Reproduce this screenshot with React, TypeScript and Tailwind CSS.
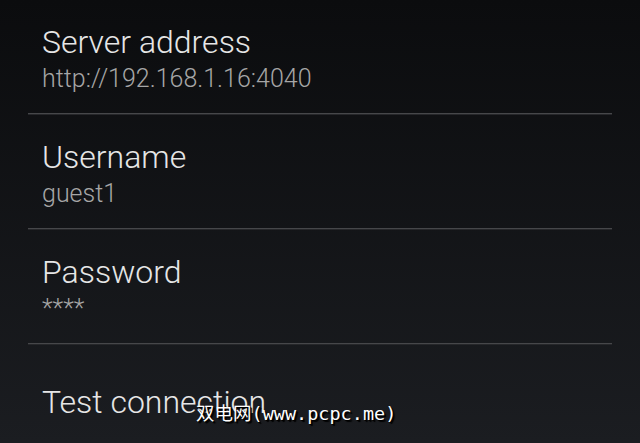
import React from 'react';

type Pref = { title: string; summary?: string };

const prefs: Pref[] = [
  { title: 'Server address', summary: 'http://192.168.1.16:4040' },
  { title: 'Username', summary: 'guest1' },
  { title: 'Password', summary: '****' },
  { title: 'Test connection' },
];

const Divider: React.FC = () => (
  <div className="mx-[28px] flex flex-col">
    <div className="h-px bg-[#46474a]" />
    <div className="h-px bg-[#26272a]" />
  </div>
);

const Row: React.FC<{ pref: Pref }> = ({ pref }) => (
  <div
    className={
      pref.summary
        ? 'flex h-[113px] flex-col pl-[42px] pt-[23px]'
        : 'flex h-[113px] flex-col justify-center pl-[42px]'
    }
  >
    <div className="text-[32px] font-light leading-[38px] text-[#e6e6e6]">{pref.title}</div>
    {pref.summary && (
      <div className="mt-[3px] text-[25px] font-light leading-[30px] text-[#a6a6a6]">{pref.summary}</div>
    )}
  </div>
);

export default function App() {
  return (
    <div
      className="relative h-[443px] w-[640px] overflow-hidden bg-gradient-to-b from-[#0b0c0e] to-[#1b1d21]"
      style={{ fontFamily: 'Roboto, "Noto Sans", sans-serif' }}
    >
      {prefs.map((p, i) => (
        <React.Fragment key={p.title}>
          {i > 0 && <Divider />}
          <Row pref={p} />
        </React.Fragment>
      ))}

      {/* watermark */}
      <div
        className="absolute left-[196px] top-[400px] text-[18.5px] leading-[28px] text-white [text-shadow:1px_1px_0_#000,2px_2px_1px_#000]"
        style={{ fontFamily: '"DejaVu Sans Mono", "Noto Sans CJK SC", monospace' }}
      >
        双电网(www.pcpc.me)
      </div>
    </div>
  );
}
